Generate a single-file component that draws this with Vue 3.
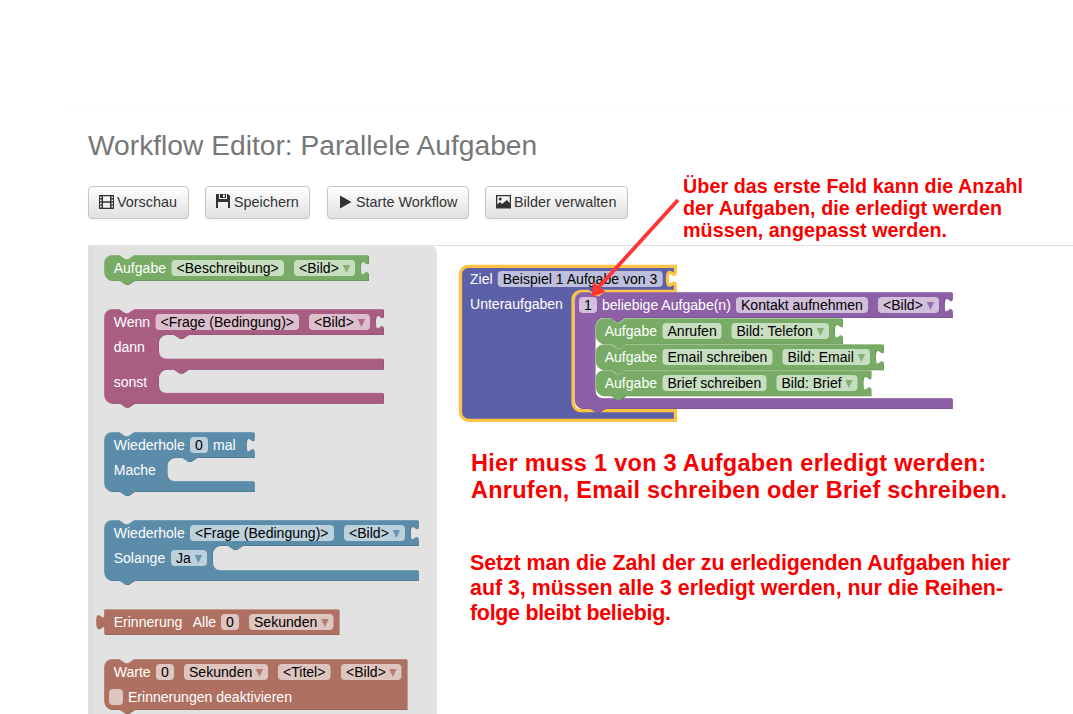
<script setup>
const palette = {
  green: { fill: '#77ab66', light: '#9cc28f', dark: '#5f8952', field: '#c8dec1' },
  pink: { fill: '#a95d83', light: '#c28ea8', dark: '#874a69', field: '#dcbecd' },
  blue: { fill: '#5b8caa', light: '#8cafc4', dark: '#497088', field: '#bdd1dd' },
  brown: { fill: '#ae7061', light: '#c69b90', dark: '#8b5a4e', field: '#dec5bf' },
  indigo: { fill: '#5c60a8', light: '#8d90c2', dark: '#4a4d86', field: '#bebfdc' },
  purple: { fill: '#8c5fa7', light: '#ae8fc1', dark: '#704c86', field: '#d1bfdc' },
}

// Puzzle outline: rows run down the right-hand side, then back along the bottom.
function outline({ x, y, right, rows, square, noTop, noBottom }) {
  let d = square ? `M ${x},${y}` : `M ${x},${y + 8} a 8,8 0 0,1 8,-8`
  if (!square && !noTop) d += ` H ${x + 15} l 6,4 3,0 6,-4`
  d += ` H ${right}`
  for (const r of rows) {
    if (r.inner) {
      d += ` H ${r.inner + 30} l -6,4 -3,0 -6,-4 H ${r.inner + 8} a 8,8 0 0,0 -8,8 v ${r.h - 16} a 8,8 0 0,0 8,8 H ${right}`
    } else if (r.tab) {
      d += ` v 5 c 0,10 -8,-8 -8,7.5 s 8,-2.5 8,7.5 v ${r.h - 20}`
    } else {
      d += ` v ${r.h}`
    }
  }
  if (square) return d + ` H ${x} V ${y + 20} c 0,-10 -8,8 -8,-7.5 s 8,2.5 8,-7.5 z`
  if (!noBottom) d += ` H ${x + 30} l -6,4 -3,0 -6,-4`
  return d + ` H ${x + 8} a 8,8 0 0,1 -8,-8 z`
}

const L = (x, y, s) => ({ kind: 'label', x, y, s })
const F = (x, y, w, s, drop = false) => ({ kind: 'field', x, y, w, s, drop })
const line = [{ h: 25, tab: true }]

const blocks = [
  { c: 'green', x: 104.5, y: 255.5, right: 368.5, rows: line,
    items: [L(113.7, 273, 'Aufgabe'), F(171.5, 273, 112.5, '<Beschreibung>'), F(294, 273, 61, '<Bild>', true)] },
  { c: 'pink', x: 104.5, y: 309.5, right: 383.5, rows: [{ h: 25, tab: true }, { h: 24.5, inner: 158.5 }, { h: 10.3 }, { h: 24, inner: 158.5 }, { h: 10 }],
    items: [L(113.7, 327, 'Wenn'), F(155.5, 327, 143.5, '<Frage (Bedingung)>'), F(309, 327, 61, '<Bild>', true), L(113.7, 352, 'dann'), L(113.7, 387, 'sonst')] },
  { c: 'blue', x: 104.5, y: 432.5, right: 254.2, rows: [{ h: 25, tab: true }, { h: 24, inner: 167 }, { h: 10 }],
    items: [L(113.7, 450, 'Wiederhole'), F(190, 450, 18, '0'), L(213, 450, 'mal'), L(113.7, 475, 'Mache')] },
  { c: 'blue', x: 104.5, y: 520.5, right: 418.3, rows: [{ h: 25, tab: true }, { h: 25, inner: 212.5 }, { h: 10 }],
    items: [L(113.7, 538, 'Wiederhole'), F(190, 538, 144, '<Frage (Bedingung)>'), F(344, 538, 61, '<Bild>', true), L(113.7, 563, 'Solange'), F(171, 563, 36, 'Ja', true)] },
  { c: 'brown', x: 104.5, y: 609.7, right: 339, rows: [{ h: 24.8 }], square: true,
    items: [L(113.7, 627, 'Erinnerung'), L(192.7, 627, 'Alle'), F(221, 627, 18, '0'), F(249, 627, 84.5, 'Sekunden', true)] },
  { c: 'brown', x: 104.5, y: 659.5, right: 407, rows: [{ h: 50 }],
    items: [L(113.7, 677, 'Warte'), F(156, 677, 18, '0'), F(184, 677, 84, 'Sekunden', true), F(278, 677, 52.5, '<Titel>'), F(341, 677, 60.5, '<Bild>', true), F(109, 702, 14, ''), L(128, 702, 'Erinnerungen deaktivieren')] },
  { c: 'indigo', x: 460.5, y: 266.3, right: 675.4, selected: true, noTop: true, noBottom: true, rows: [{ h: 25, tab: true }, { h: 119.3, inner: 573 }, { h: 9.7 }],
    items: [L(470, 284, 'Ziel'), F(497.7, 284, 165, 'Beispiel 1 Aufgabe von 3'), L(470, 309, 'Unteraufgaben')] },
  { c: 'purple', x: 575, y: 292.5, right: 952.3, rows: [{ h: 25, tab: true }, { h: 81, inner: 595 }, { h: 10 }],
    gap: true,
    items: [F(579, 310, 18, '1'), L(602, 310, 'beliebige Aufgabe(n)'), F(736, 310, 132, 'Kontakt aufnehmen'), F(878, 310, 61, '<Bild>', true)] },
  { c: 'green', x: 596, y: 318.7, right: 842.5, rows: line,
    items: [L(604.7, 336, 'Aufgabe'), F(662.5, 336, 59, 'Anrufen'), F(731.5, 336, 97.5, 'Bild: Telefon', true)] },
  { c: 'green', x: 596, y: 344.7, right: 883.5, rows: line,
    items: [L(604.7, 362, 'Aufgabe'), F(662.5, 362, 110, 'Email schreiben'), F(782.5, 362, 87.5, 'Bild: Email', true)] },
  { c: 'green', x: 596, y: 370.7, right: 871, rows: line,
    items: [L(604.7, 388, 'Aufgabe'), F(662.5, 388, 104, 'Brief schreiben'), F(776.5, 388, 81, 'Bild: Brief', true)] },
].map((b) => ({ ...b, d: outline(b), p: palette[b.c] }))

const notes = [
  { size: 19.7, lines: [[683, 193, 340, 'Über das erste Feld kann die Anzahl'], [683, 215, 319, 'der Aufgaben, die erledigt werden'], [683, 237, 264, 'müssen, angepasst werden.']] },
  { size: 23.5, lines: [[471, 471, 515, 'Hier muss 1 von 3 Aufgaben erledigt werden:'], [471, 498, 536, 'Anrufen, Email schreiben oder Brief schreiben.']] },
  { size: 21.4, lines: [[470, 570, 540, 'Setzt man die Zahl der zu erledigenden Aufgaben hier'], [470, 595, 533, 'auf 3, müssen alle 3 erledigt werden, nur die Reihen-'], [470, 620, 201, 'folge bleibt beliebig.']] },
]
</script>

<template>
  <div class="page">
    <header class="top"></header>
    <h1>Workflow Editor: Parallele Aufgaben</h1>
    <nav class="toolbar">
      <button class="preview">
        <svg width="15" height="14" viewBox="0 0 15 14"><path fill="#333" fill-rule="evenodd" d="M0 0h15v14H0zM4 1.3v4.9h7V1.3zM4 7.7v5h7v-5zM1 1.4v1.7h1.6V1.4zm0 3.1v1.7h1.6V4.5zm0 3.2v1.7h1.6V7.7zm0 3.1v1.7h1.6v-1.7zM12.4 1.4v1.7H14V1.4zm0 3.1v1.7H14V4.5zm0 3.2v1.7H14V7.7zm0 3.1v1.7H14v-1.7z" /></svg>
        <span>Vorschau</span>
      </button>
      <button class="save">
        <svg class="raised" width="14" height="14" viewBox="0 0 14 14"><path fill="#333" fill-rule="evenodd" d="M0 0h3v5h8V0h1l2 2v12h-2V8H2v6H0zM4 0h6v4H4zM7 .6v2.6h1.8V.6z" /></svg>
        <span>Speichern</span>
      </button>
      <button class="start">
        <svg width="12" height="14" viewBox="0 0 12 14"><path fill="#333" d="M0 .5 11.5 7 0 13.5z" /></svg>
        <span>Starte Workflow</span>
      </button>
      <button class="images">
        <svg width="15" height="14" viewBox="0 0 15 14"><path fill="#333" fill-rule="evenodd" d="M0 0h15v13.5H0zM1.3 1.3v8.2L4 7l2 2 4.8-4 2.9 3V1.3z" /><circle cx="4.2" cy="4" r="1.5" fill="#333" /></svg>
        <span>Bilder verwalten</span>
      </button>
    </nav>
    <main class="workspace">
      <svg class="canvas" viewBox="88 245 985 469" width="985" height="469">
        <path class="rule" d="M88 245.5H1073" />
        <path class="flyout" d="M88 245H429a8 8 0 0 1 8 8V714H88z" />
        <path class="flyout-edge" d="M88 246H94V714H88z" />
        <g v-for="(b, i) in blocks" :key="i">
          <rect v-if="b.gap" x="595" y="318" width="40" height="80.5" fill="#fff" rx="8" />
          <path :d="b.d" :fill="b.p.dark" transform="translate(.5 .5)" />
          <path :d="b.d" :fill="b.p.light" transform="translate(-.5 -.5)" />
          <path :d="b.d" :fill="b.p.fill" :class="{ selected: b.selected }" />
          <template v-for="(t, j) in b.items" :key="j">
            <text v-if="t.kind === 'label'" class="label" :x="t.x" :y="t.y">{{ t.s }}</text>
            <template v-else>
              <rect :x="t.x" :y="t.y - 13" :width="t.w" height="16" rx="4" :fill="b.p.field" />
              <text class="value" :x="t.x + 5" :y="t.y">{{ t.s }}</text>
              <path v-if="t.drop" class="arrow" :d="`M${t.x + t.w - 12.3} ${t.y - 8}h7.4l-3.7 8z`" :fill="b.p.fill" />
            </template>
          </template>
        </g>
      </svg>
    </main>
    <svg class="notes" width="1073" height="714" viewBox="0 0 1073 714">
      <path d="M678 200 597.5 288.5" stroke="#ff3535" stroke-width="3.8" />
      <path d="M591.5 297 593.3 281.8 605.5 292z" fill="#ff3535" />
      <g v-for="n in notes" :key="n.size" :font-size="n.size">
        <text v-for="l in n.lines" :key="l[1]" :x="l[0]" :y="l[1]" :textLength="l[2]">{{ l[3] }}</text>
      </g>
    </svg>
  </div>
</template>

<style>
body {
  margin: 0;
  background: #fff;
  overflow: hidden;
}
</style>

<style scoped>
.page {
  position: relative;
  width: 1073px;
  height: 714px;
  overflow: hidden;
  background: #fff;
  font-family: "Liberation Sans", Arial, sans-serif;
}
.top {
  height: 107px;
  margin-left: 65px;
  border-bottom: 1px solid #fafafa;
}
h1 {
  margin: 17px 0 0 88px;
  height: 40px;
  line-height: 40px;
  font-size: 28.2px;
  font-weight: 400;
  color: #777;
  white-space: nowrap;
}
.toolbar {
  display: flex;
  gap: 16px;
  margin: 21px 0 0 88px;
  height: 33px;
}
button {
  box-sizing: border-box;
  display: flex;
  align-items: center;
  gap: 3px;
  height: 33px;
  padding: 0 0 1px 10px;
  border: 1px solid #c5c5c5;
  border-radius: 4px;
  background: linear-gradient(#fff, #e0e0e0);
  box-shadow: 0 1px 2px rgba(0, 0, 0, 0.05);
  font: 14.4px "Liberation Sans", Arial, sans-serif;
  color: #333;
  white-space: nowrap;
}
.preview { width: 101px; }
.save { width: 105px; gap: 4px; }
.start { width: 142px; margin-left: 1px; padding-left: 12px; gap: 4px; }
.images { width: 143px; }
.raised { margin-top: -3px; }
.workspace {
  margin: 26px 0 0 88px;
  height: 469px;
}
.canvas { display: block; }
.rule { stroke: #dedede; }
.flyout { fill: #e2e2e2; }
.flyout-edge { fill: #dedede; }
.selected {
  stroke: #fdc342;
  stroke-width: 3.2;
}
.label,
.value {
  font-size: 14.05px;
  fill: #fff;
  white-space: pre;
}
.value { fill: #000; }
.arrow { opacity: 0.85; }
.notes {
  position: absolute;
  inset: 0;
  pointer-events: none;
}
.notes text {
  font-weight: 700;
  fill: #f80000;
}
</style>
